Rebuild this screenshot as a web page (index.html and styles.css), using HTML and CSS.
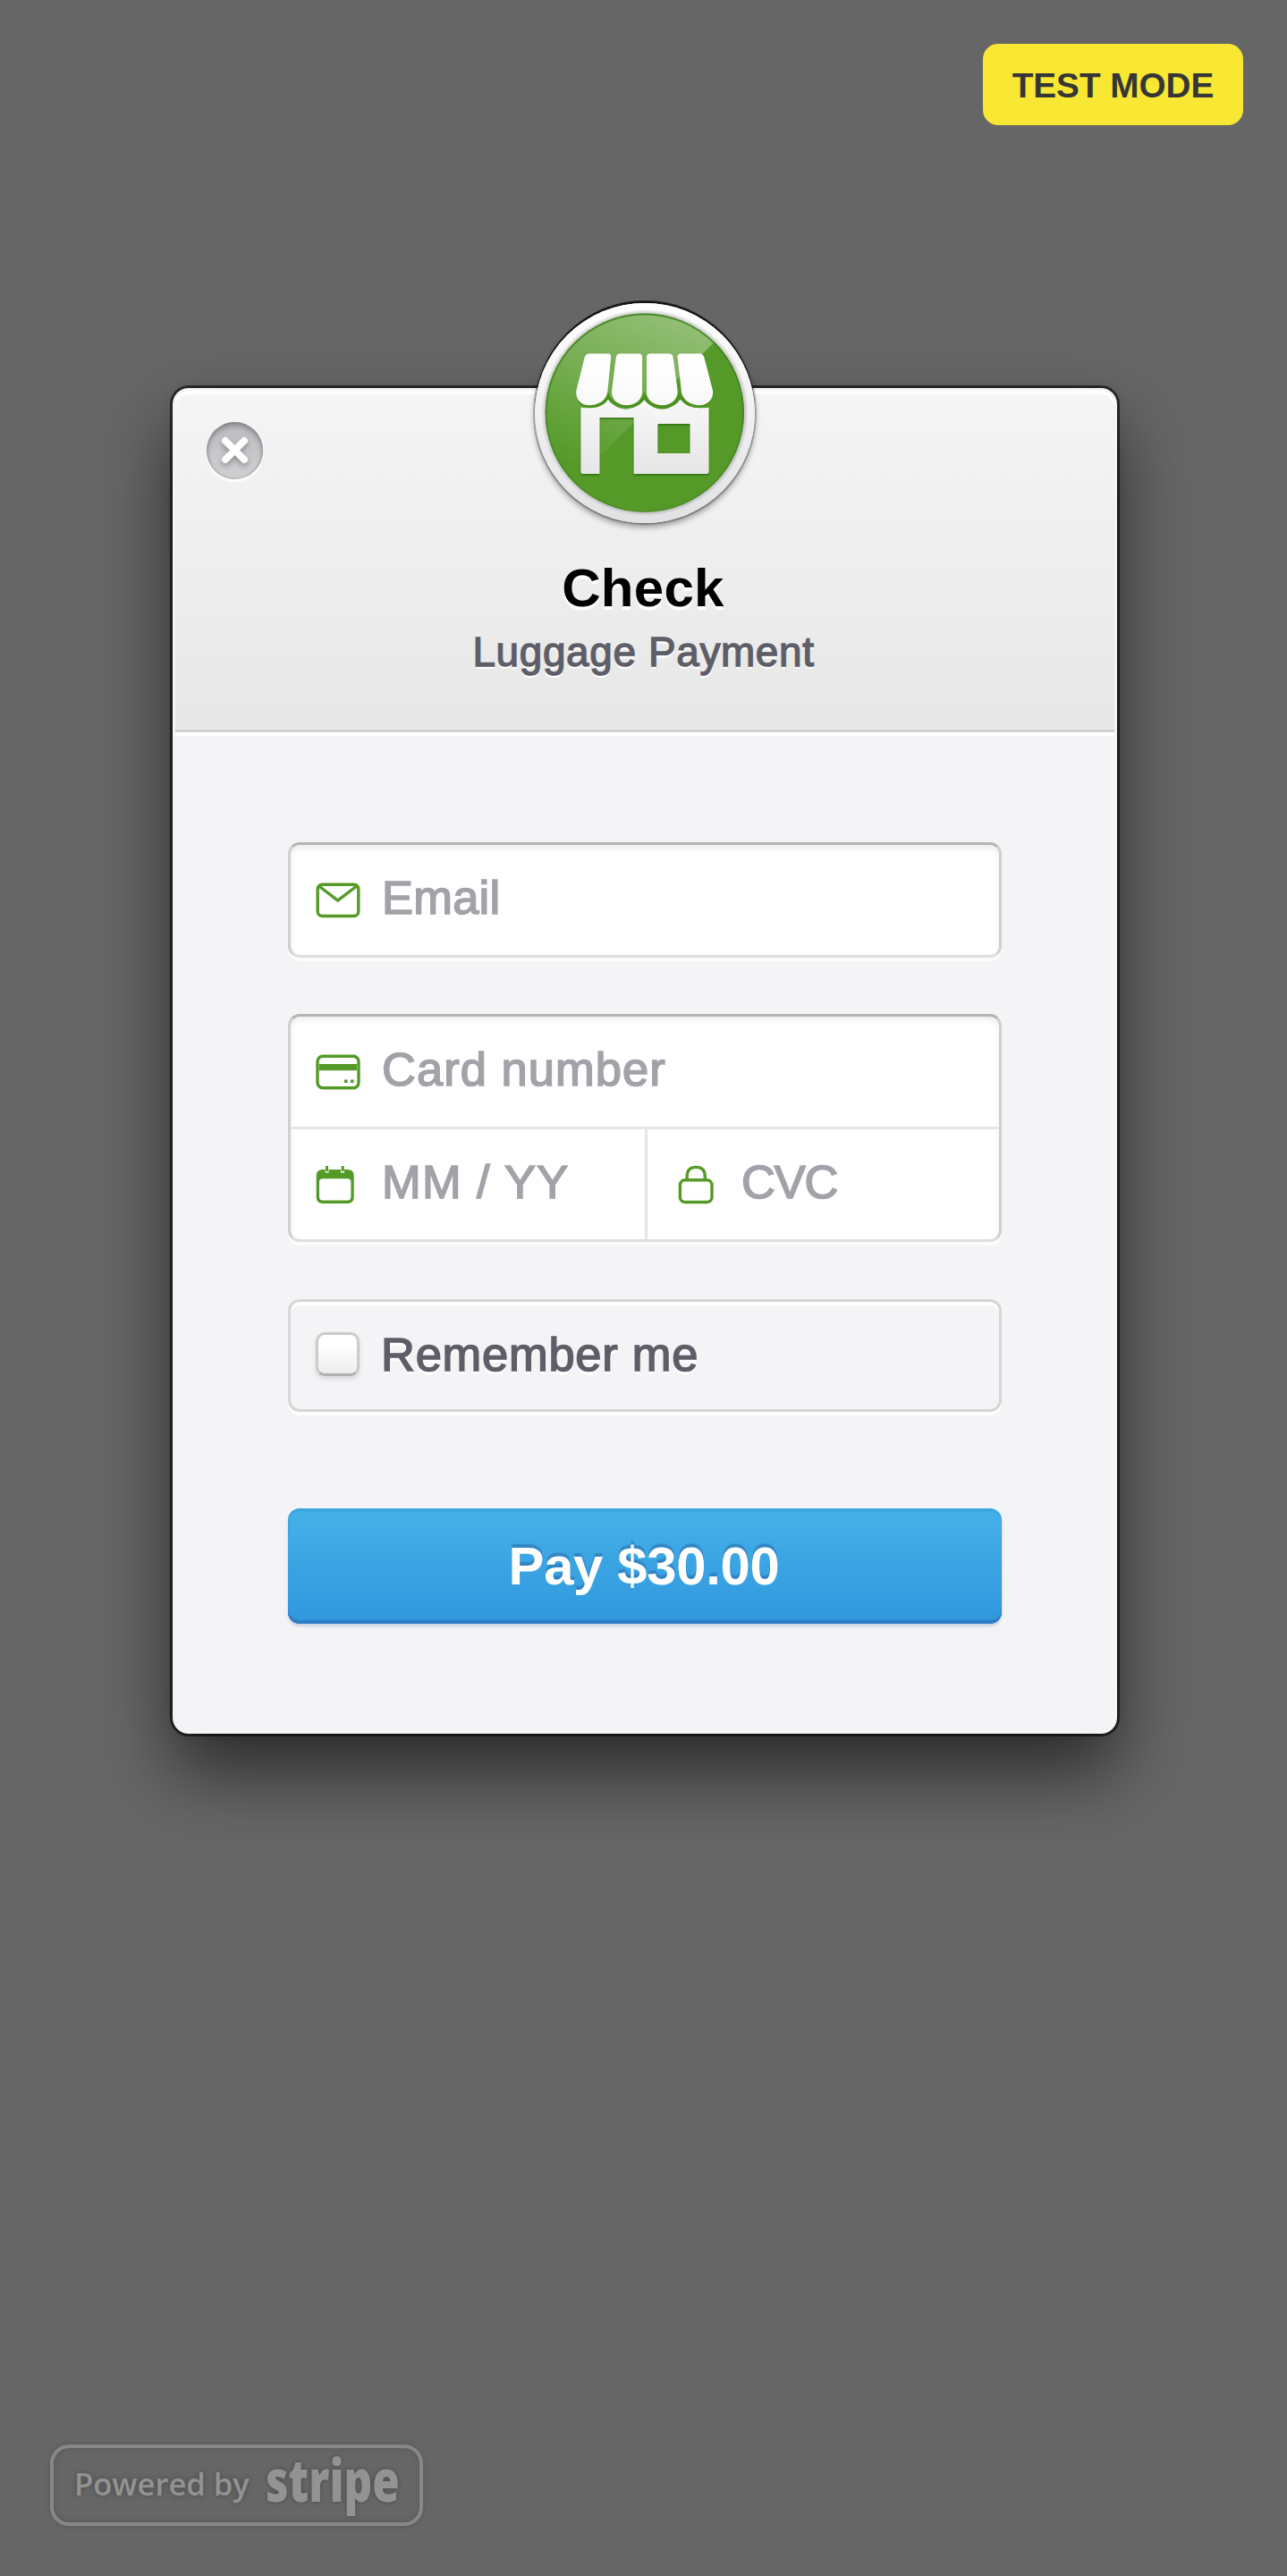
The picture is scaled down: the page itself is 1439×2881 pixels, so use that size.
FILE: index.html
```html
<!DOCTYPE html>
<html lang="en">
<head>
<meta charset="utf-8">
<title>Checkout</title>
<link rel="stylesheet" href="styles.css">
</head>
<body>
<div class="page">
  <div class="topbar"><span class="test-badge">TEST MODE</span></div>

  <main class="modal">
    <header class="header">
      <button class="close" type="button" aria-label="Close">
        <svg viewBox="0 0 64 64" width="64" height="64"><path d="M21 21 42 42M42 21 21 42"/></svg>
      </button>
      <div class="logo">
        <svg viewBox="52.4 54.4 739.2 739.2" width="246" height="246">
          <defs>
            <linearGradient id="gloss" x1="0.7" y1="0" x2="0.3" y2="1">
              <stop offset="0" stop-color="#fff" stop-opacity=".38"/>
              <stop offset=".85" stop-color="#fff" stop-opacity="0"/>
            </linearGradient>
            <linearGradient id="shop" gradientUnits="userSpaceOnUse" x1="0" y1="225" x2="0" y2="632">
              <stop offset="0" stop-color="#fff"/>
              <stop offset=".3" stop-color="#fbfbfb"/>
              <stop offset="1" stop-color="#e5e5e5"/>
            </linearGradient>
            <linearGradient id="ring" x1="0" y1="0" x2="0" y2="1">
              <stop offset="0" stop-color="#fff"/>
              <stop offset="1" stop-color="#e2e2e5"/>
            </linearGradient>
            <clipPath id="disc"><circle cx="422.500" cy="425" r="334"/></clipPath>
            <filter id="soft"><feGaussianBlur stdDeviation="4"/></filter>
            <filter id="drop" x="-10%" y="-10%" width="120%" height="125%"><feDropShadow dx="0" dy="4" stdDeviation="3" flood-color="#245a05" flood-opacity=".75"/></filter>
          </defs>
          <circle cx="422" cy="424" r="369.600" fill="url(#ring)"/>
          <circle cx="422.500" cy="422" r="336" fill="none" stroke="#000" stroke-opacity=".24" stroke-width="8" filter="url(#soft)"/>
          <g transform="translate(-1 -3)">
            <circle cx="422.500" cy="426" r="334" fill="#559a28"/>
            <g clip-path="url(#disc)">
              <path fill="url(#gloss)" d="M80 80H765L80 765Z"/>
              <circle cx="422.500" cy="427" r="335" fill="none" stroke="#3f7d1c" stroke-opacity=".75" stroke-width="12"/>
            </g>
            <g fill="url(#shop)" filter="url(#drop)">
              <path fill-rule="evenodd" d="M208 408Q270 418 300 378Q322 414 362 414Q404 410 421 378Q444 414 482 414Q520 412 542 378Q570 418 638 408V622Q638 631 629 631H386V442H271V631H217Q208 631 208 622ZM466 463V562H575V463Z"/>
            </g>
            <path fill="none" stroke="#4c9120" stroke-width="11" stroke-linecap="round" d="M204 388Q218 404 240 404Q288 402 299 368Q314 404 362 404Q408 402 421 370Q436 404 482 404Q530 402 541 368Q560 404 607 404Q630 402 640 388"/>
            <g fill="url(#shop)">
              <path d="M236 227H299Q310 227 309 239L298 355C295 385 264 401 238 401C206 401 189 378 193 350L220 242Q224 227 236 227Z"/>
              <path d="M340 227H402Q414 227 414 239V355C414 385 388 401 362 401C331 401 310 380 312 352L326 241Q328 227 340 227Z"/>
              <path d="M441 227H504Q516 227 518 240L533 352C535 380 511 401 482 401C454 401 429 385 429 355V239Q429 227 441 227Z"/>
              <path d="M545 227H607Q619 227 623 242L651 350C656 377 636 401 607 401C577 401 549 383 546 355L533 239Q532 227 545 227Z"/>
            </g>
          </g>
        </svg>
      </div>
      <h1 class="title">Check</h1>
      <p class="subtitle">Luggage Payment</p>
    </header>

    <form class="form">
      <div class="fieldset fieldset-email">
        <label class="field">
          <svg class="icon" viewBox="0 0 50 40" width="50" height="40"><rect x="2.200" y="2.200" width="45.600" height="35.300" rx="5"/><path d="M3 3.500 24.700 20 46.500 3.500"/></svg>
          <input class="email" type="text" placeholder="Email">
        </label>
      </div>

      <div class="fieldset fieldset-card">
        <label class="field">
          <svg class="icon" viewBox="0 0 50 40" width="50" height="40"><rect x="2" y="2.200" width="46" height="35.600" rx="6"/><path class="solid" d="M4 11H46V18.300H4ZM32 28.500H35.500V32H32ZM39 28.500H42.500V32H39Z"/></svg>
          <input class="number" type="text" placeholder="Card number">
        </label>
        <div class="row">
          <label class="field field-expiry">
            <svg class="icon" viewBox="0 0 50 44" width="50" height="44"><path class="solid" fill-rule="evenodd" d="M8 5H10.500V8.500H14.500V5H28V8.500H32V5H35.500Q42.700 5 42.700 12V36Q42.700 43 35.500 43H8Q.7 43 .7 36V12Q.7 5 8 5ZM8 15.300Q4 15.300 4 19V35.500Q4 39.500 8 39.500H35.500Q39.400 39.500 39.400 35.500V19Q39.400 15.300 35.500 15.300ZM11 1H14V7H11ZM28.700 1H31.700V7H28.700Z"/></svg>
            <input class="expiry" type="text" placeholder="MM / YY">
          </label>
          <label class="field field-cvc">
            <svg class="icon" viewBox="0 0 44 44" width="44" height="44"><rect x="2.400" y="16.800" width="35.600" height="24.700" rx="5.500"/><path d="M10.200 16.500V12.500Q10.200 2.400 20.200 2.400Q30.200 2.400 30.200 12.500V16.500"/></svg>
            <input class="cvc" type="text" placeholder="CVC">
          </label>
        </div>
      </div>

      <label class="remember"><span class="checkbox"></span><span class="remember-text">Remember me</span></label>

      <button class="pay" type="button">Pay $30.00</button>
    </form>
  </main>

  <footer class="powered"><span class="powered-by">Powered by</span><span class="brand">stripe</span></footer>
</div>
</body>
</html>
```

FILE: styles.css
```css
* { box-sizing: border-box; }
body {
  margin: 0;
  background: #666;
  font-family: "Liberation Sans", Arial, sans-serif;
}
.page {
  display: flex;
  flex-direction: column;
  height: 2881px;
  overflow: hidden;
}
.topbar {
  display: flex;
  justify-content: flex-end;
  padding: 49px 49px 0 0;
}
.test-badge {
  width: 291px;
  height: 91px;
  padding-top: 2px;
  border-radius: 17px;
  background: #f8e733;
  color: #363636;
  font-size: 38.7px;
  font-weight: bold;
  line-height: 89px;
  text-align: center;
}
.modal {
  width: 1056px;
  height: 1505px;
  margin: 294px 0 0 193px;
  padding: 3px;
  border-radius: 18px;
  background: #f4f4f7;
  box-shadow: 0 0 0 3px rgba(0, 0, 0, .58), 0 42px 80px rgba(0, 0, 0, .58), 0 0 12px rgba(0, 0, 0, .12);
}
.header {
  position: relative;
  display: flex;
  flex-direction: column;
  align-items: center;
  height: 382px;
  border-bottom: 3px solid #d1d1d2;
  border-radius: 15px 15px 0 0;
  background: linear-gradient(#f5f5f7, #e7e7e7);
  box-shadow: inset 0 4px 0 #fff, 0 4px 0 #fff;
}
.close {
  position: absolute;
  top: 35px;
  left: 35px;
  width: 63px;
  height: 64px;
  padding: 0;
  border: 0;
  border-radius: 50%;
  background: linear-gradient(#bdbdc1, #d0d0d3);
  box-shadow: inset 0 4px 6px rgba(0, 0, 0, .28), inset 0 0 3px rgba(0, 0, 0, .25), 0 3px 2px #fff;
}
.close svg {
  display: block;
  fill: none;
  stroke: #fff;
  stroke-width: 8;
  stroke-linecap: round;
  filter: drop-shadow(0 3px 3px rgba(0, 0, 0, .3));
}
.logo {
  width: 246px;
  height: 246px;
  margin-top: -98px;
  border-radius: 50%;
  background: #f2f2f4;
  box-shadow: 0 -3px 0 rgba(0, 0, 0, .72), 0 0 0 2px rgba(0, 0, 0, .22), 0 4px 7px rgba(0, 0, 0, .42);
}
.logo svg { display: block; }
.title {
  margin: 43px 4px 0 0;
  color: #000;
  font-size: 60px;
  line-height: 60px;
  letter-spacing: .3px;
  text-shadow: 0 4px 0 #fff;
}
.subtitle {
  margin: 17px 3px 0 0;
  color: #5e5e68;
  font-size: 45.8px;
  line-height: 50px;
  letter-spacing: .7px;
  text-shadow: 0 3px 0 #fff;
  -webkit-text-stroke: 1.4px #5e5e68;
}
.form {
  display: flex;
  flex-direction: column;
  padding: 123px 126px 0;
}
.fieldset {
  border: 3px solid #cfcfd0;
  border-top-color: #b4b4b4;
  border-bottom-color: #dedede;
  border-radius: 13px;
  background: #fff;
  box-shadow: 0 4px 0 #fcfcfd, inset 0 4px 6px rgba(0, 0, 0, .07);
}
.fieldset-email { height: 129px; }
.fieldset-card { height: 255px; margin-top: 63px; }
.field {
  display: flex;
  flex: 1;
  align-items: center;
  height: 123px;
  padding-left: 28px;
}
.row {
  display: flex;
  height: 126px;
  border-top: 3px solid #e5e5e5;
}
.row .field-expiry { flex: 0 0 396px; }
.row .field-cvc { border-left: 3px solid #e5e5e5; padding-left: 34px; }
.icon {
  flex: none;
  fill: none;
  stroke: #559a28;
  stroke-width: 3.4;
}
.icon .solid { fill: #559a28; stroke: none; }
input {
  width: 100%;
  min-width: 0;
  height: 80px;
  margin-left: 24px;
  padding: 0 0 6px;
  border: 0;
  background: none;
  font: 52.4px "Liberation Sans", Arial, sans-serif;
  -webkit-text-stroke: 1.7px #a3a2a9;
}
.field-cvc input { margin-left: 27px; }
input::placeholder { color: #a3a2a9; opacity: 1; }
.email { letter-spacing: .3px; }
.number { letter-spacing: 1.1px; }
.expiry { letter-spacing: 1.4px; }
.cvc { letter-spacing: -1.2px; }
.remember {
  display: flex;
  align-items: center;
  height: 126px;
  margin-top: 64px;
  padding-left: 28px;
  border: 3px solid #d6d6d8;
  border-radius: 13px;
  box-shadow: inset 0 4px 0 #fff, 0 4px 0 #fff;
  color: #5e5e68;
  font-size: 52.4px;
  letter-spacing: .8px;
  text-shadow: 0 4px 0 #fff;
  -webkit-text-stroke: 1.6px #5e5e68;
}
.remember-text { padding-bottom: 3px; }
.checkbox {
  width: 49px;
  height: 49px;
  margin: -4px 24px 0 0;
  border: 3px solid #cacaca;
  border-bottom-color: #afafb1;
  border-radius: 10px;
  background: linear-gradient(#fff 25%, #ededef);
  box-shadow: 0 3px 5px rgba(0, 0, 0, .12);
}
.pay {
  height: 129px;
  margin-top: 108px;
  padding: 0 2px 1px 0;
  border: 0;
  border-radius: 13px;
  background: linear-gradient(#45b1e8, #3097de);
  box-shadow: inset 0 3px 2px rgba(40, 130, 200, .3), inset 0 -4px 1px #2d7dc6, 0 3px 3px rgba(50, 80, 150, .2);
  color: #fff;
  font: bold 59.8px "Liberation Sans", Arial, sans-serif;
  letter-spacing: -.3px;
  text-shadow: 0 -4px 1px rgba(46, 116, 180, .65);
}
.powered {
  display: flex;
  align-items: baseline;
  width: 417px;
  height: 91px;
  margin: auto 0 56px 56px;
  padding-left: 23px;
  border: 4px solid #878787;
  border-radius: 21px;
  box-shadow: 0 0 6px rgba(0, 0, 0, .15), inset 0 0 6px rgba(0, 0, 0, .15);
  color: #939393;
  font-family: "Open Sans", sans-serif;
  line-height: 56px;
  text-shadow: 0 0 6px rgba(0, 0, 0, .3);
}
.powered-by {
  font-size: 34.6px;
  font-weight: 600;
}
.brand {
  width: 150px;
  margin-left: 18px;
  font-size: 65px;
  font-weight: 800;
  transform: translateY(7px) scaleX(.76);
  transform-origin: 0 50%;
}
```
